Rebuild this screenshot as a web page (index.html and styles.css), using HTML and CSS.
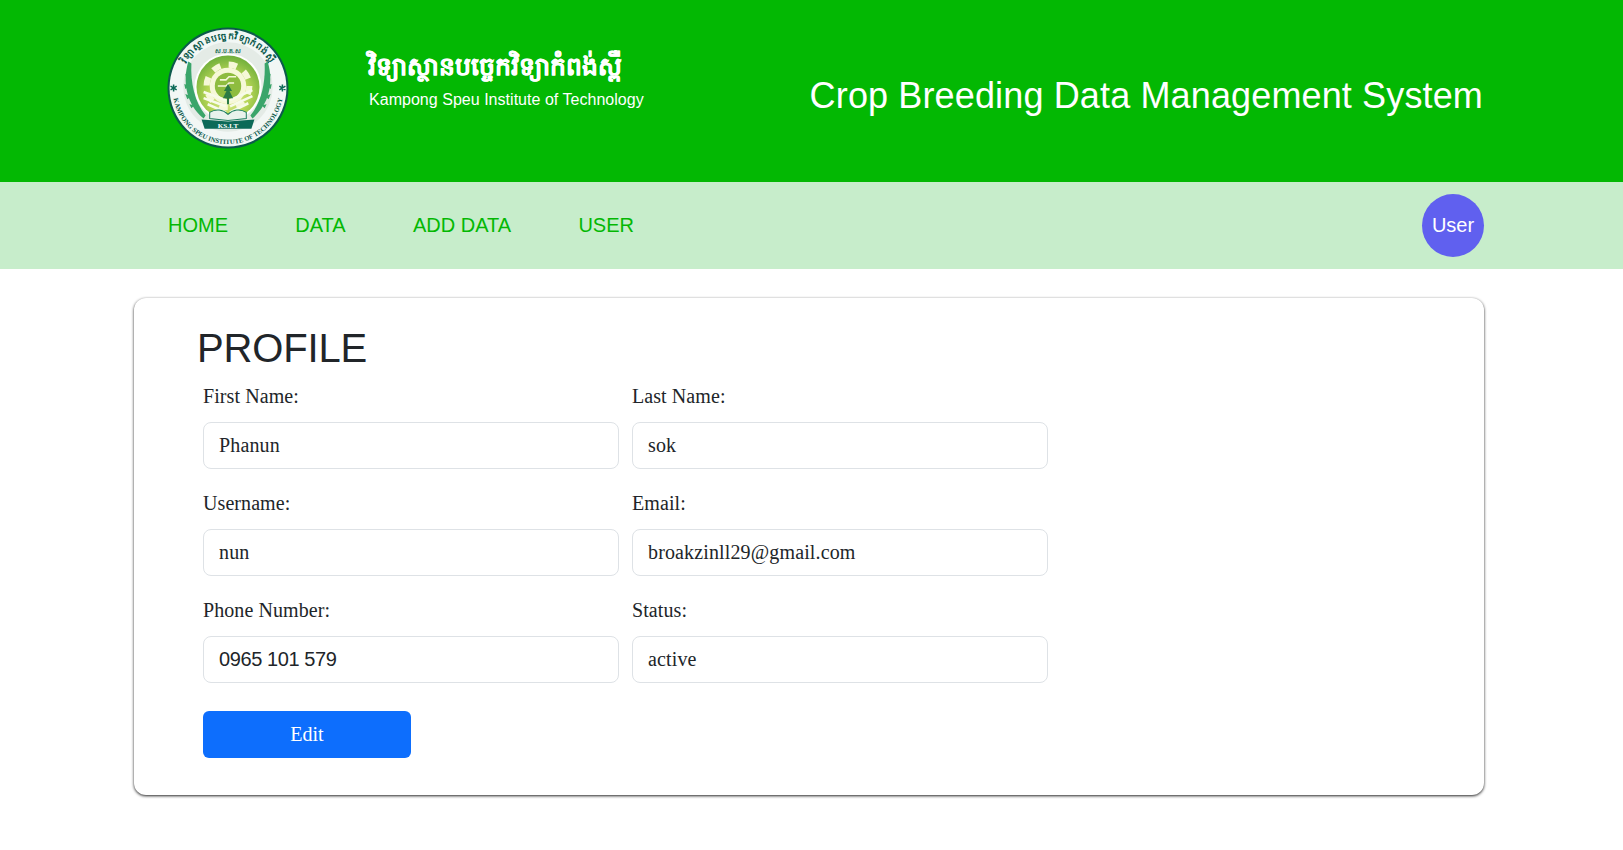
FILE: index.html
```html
<!DOCTYPE html>
<html>
<head>
    <title>Profile</title>
    <meta name="viewport" content="width=device-width, initial-scale=1">
    <link rel="stylesheet" href="styles.css">
</head>
<body>
    <header class="top-header">
        <svg class="logo" viewBox="0 0 120 120" aria-label="Kampong Speu Institute of Technology logo">
            <defs>
                <path id="ringBottom" d="M6 68 A54.500 54.500 0 0 0 114 68"/>
                <path id="ringTop" d="M13.500 48 A48 48 0 0 1 106.500 48"/>
                <radialGradient id="seal" cx="50%" cy="62%" r="62%">
                    <stop offset="0" stop-color="#eef3a8"/>
                    <stop offset="0.55" stop-color="#b4d455"/>
                    <stop offset="1" stop-color="#6fae3a"/>
                </radialGradient>
            </defs>
            <circle cx="60" cy="60" r="59.500" fill="#0c5a4c"/>
            <circle cx="60" cy="60" r="57.500" fill="#f2f7f5"/>
            <text class="ring-top"><textPath href="#ringTop" startOffset="50%" text-anchor="middle">វិទ្យាស្ថានបច្ចេកវិទ្យាកំពង់ស្ពឺ</textPath></text>
            <text class="ring-bottom"><textPath href="#ringBottom" startOffset="50%" text-anchor="middle">KAMPONG SPEU INSTITUTE OF TECHNOLOGY</textPath></text>
            <path class="ring-star" d="M6.500 56.500v7M3.500 58.200l6 3.600M9.500 58.200l-6 3.600M113.500 56.500v7M110.500 58.200l6 3.600M116.500 58.200l-6 3.600"/>

            <circle cx="60" cy="59" r="44" fill="#e4ebe6"/>
            <g class="wheat">
                <path d="M21 34 C15 54 19 76 36 90 L38 87 C27 74 23 54 24 36Z"/>
                <path d="M99 34 C105 54 101 76 84 90 L82 87 C93 74 97 54 96 36Z"/>
                <path d="M18 46l6 3-5 2ZM17 56l6 2-5 3ZM18 66l6 2-4 3ZM22 76l5 1-3 3ZM102 46l-6 3 5 2ZM103 56l-6 2 5 3ZM102 66l-6 2 4 3ZM98 76l-5 1 3 3Z"/>
            </g>
            <text class="seal-top" x="60" y="26" text-anchor="middle">ស.ប.គ.ស</text>
            <circle cx="60" cy="59" r="33" fill="#fff"/>
            <circle cx="60" cy="59" r="31" fill="url(#seal)"/>
            <circle class="gear" cx="60" cy="58" r="18"/>
            <circle class="gear-teeth" cx="60" cy="58" r="21"/>
            <circle cx="60" cy="58" r="13" fill="#8ebc3f"/>
            <path d="M52 52h6l3-3h7M50 58h8l3-3h5" stroke="#f4f8d8" stroke-width="1.500" fill="none"/>
            <path d="M36 64 L58 72 M36 70 L58 78 M40 76 L58 84 M84 62 L62 72 M84 68 L62 78 M80 75 L62 84" stroke="#f7fbe8" stroke-width="2.500" fill="none"/>
            <path d="M60 56 l4 7 -2.500 0 3.500 7 -4 0 0 6 -2 0 0 -6 -4 0 3.500 -7 -2.500 0Z" fill="#2a7a45"/>
            <path d="M42 84 C48 80 55 81 60 86 C65 81 72 80 78 84 L78 90 L60 92 L42 90Z" fill="#e9f2ec" stroke="#1f7f62" stroke-width="1"/>
            <path d="M34 91 L60 93 L86 91 L83 100 H37Z" fill="#0c6a58"/>
            <text class="seal-label" x="60" y="99" text-anchor="middle">KS.I.T</text>
        </svg>
        <div class="brand">
            <div class="brand-km">វិទ្យាស្ថានបច្ចេកវិទ្យាកំពង់ស្ពឺ</div>
            <div class="brand-en">Kampong Speu Institute of Technology</div>
        </div>
        <div class="site-title">Crop Breeding Data Management System</div>
    </header>

    <nav class="top-nav">
        <a href="#">HOME</a>
        <a href="#">DATA</a>
        <a href="#">ADD DATA</a>
        <a href="#">USER</a>
        <button class="user-btn">User</button>
    </nav>

    <main class="card">
        <h1>PROFILE</h1>
        <form class="profile-form">
            <div class="field">
                <label for="firstName">First Name:</label>
                <input id="firstName" type="text" value="Phanun">
            </div>
            <div class="field">
                <label for="lastName">Last Name:</label>
                <input id="lastName" type="text" value="sok">
            </div>
            <div class="field">
                <label for="username">Username:</label>
                <input id="username" type="text" value="nun">
            </div>
            <div class="field">
                <label for="email">Email:</label>
                <input id="email" type="text" value="broakzinll29@gmail.com">
            </div>
            <div class="field">
                <label for="phone">Phone Number:</label>
                <input id="phone" class="phone" type="text" value="0965 101 579">
            </div>
            <div class="field">
                <label for="status">Status:</label>
                <input id="status" type="text" value="active">
            </div>
            <button type="button" class="edit-btn">Edit</button>
        </form>
    </main>
</body>
</html>
```

FILE: styles.css
```css
body {
    margin: 0;
    background-color: #fff;
    color: #212529;
    font-family: "Liberation Serif", serif;
    font-size: 20px;
}

.top-header {
    display: flex;
    align-items: center;
    height: 182px;
    padding: 0 140px 0 167px;
    background-color: #03b803;
    color: #fff;
    font-family: "Liberation Sans", Arial, sans-serif;
}

.logo {
    width: 122px;
    height: 122px;
    margin-top: -7px;
    flex-shrink: 0;
}

.ring-top {
    font-size: 9px;
    font-weight: bold;
    letter-spacing: 0.6px;
    fill: #0c5a4c;
}

.ring-bottom {
    font-family: "Liberation Serif", serif;
    font-size: 6.600px;
    font-weight: bold;
    fill: #0c5a4c;
}

.ring-star {
    fill: none;
    stroke: #0c6a58;
    stroke-width: 1.500;
}

.wheat {
    fill: #3aa56a;
}

.seal-top {
    font-size: 6px;
    font-weight: bold;
    fill: #1f6f58;
}

.gear {
    fill: #f6f8d8;
}

.gear-teeth {
    fill: none;
    stroke: #f6f8d8;
    stroke-width: 6;
    stroke-dasharray: 8.250 8.250;
}

.seal-label {
    font-family: "Liberation Serif", serif;
    font-size: 7px;
    font-weight: bold;
    fill: #fff;
}

.brand {
    margin-left: 78px;
    margin-top: -30px;
}

.brand-km {
    margin-left: 1px;
    font-size: 25px;
    font-weight: bold;
    line-height: 48px;
    -webkit-text-stroke: 0.3px #fff;
}

.brand-en {
    margin-left: 2px;
    font-size: 16px;
    line-height: 20px;
    letter-spacing: 0.03px;
}

.site-title {
    margin-left: auto;
    margin-top: 10px;
    font-size: 36px;
    letter-spacing: 0.14px;
}

.top-nav {
    display: flex;
    align-items: center;
    gap: 67.300px;
    height: 87px;
    padding: 0 139px 0 168px;
    background-color: #c7edcb;
    font-family: "Liberation Sans", Arial, sans-serif;
}

.top-nav a {
    color: #03b803;
    font-size: 20px;
    text-decoration: none;
}

.user-btn {
    width: 62px;
    height: 63px;
    margin-left: auto;
    padding: 0;
    border: 0;
    border-radius: 50%;
    background-color: #6060ef;
    color: #fff;
    font-family: "Liberation Sans", Arial, sans-serif;
    font-size: 20px;
}

.card {
    box-sizing: border-box;
    width: 1350px;
    height: 497px;
    margin: 29px 0 30px 134px;
    padding: 26px 0 0 63px;
    border-radius: 12px;
    box-shadow: 0 1px 3px #222;
}

.card h1 {
    margin: 0 0 9px;
    font-family: "Liberation Sans", Arial, sans-serif;
    font-size: 40px;
    font-weight: 400;
    line-height: 48px;
    letter-spacing: -0.15px;
}

.profile-form {
    display: grid;
    grid-template-columns: 416px 416px;
    column-gap: 13px;
    row-gap: 19px;
    margin-left: 6px;
}

.field label {
    display: block;
    height: 30px;
    margin-bottom: 11px;
    line-height: 30px;
    letter-spacing: 0.08px;
}

.field input {
    display: block;
    box-sizing: border-box;
    width: 100%;
    height: 47px;
    padding: 0 15px;
    border: 1px solid #dee2e6;
    border-radius: 8px;
    color: #212529;
    font-family: "Liberation Serif", serif;
    font-size: 20px;
    letter-spacing: 0.14px;
}

.field input.phone {
    font-family: "Liberation Sans", Arial, sans-serif;
    letter-spacing: -0.4px;
}

.edit-btn {
    justify-self: start;
    width: 208px;
    height: 47px;
    margin-top: 9px;
    border: 0;
    border-radius: 6px;
    background-color: #0d6efd;
    color: #fff;
    font-family: "Liberation Serif", serif;
    font-size: 20px;
}
```
